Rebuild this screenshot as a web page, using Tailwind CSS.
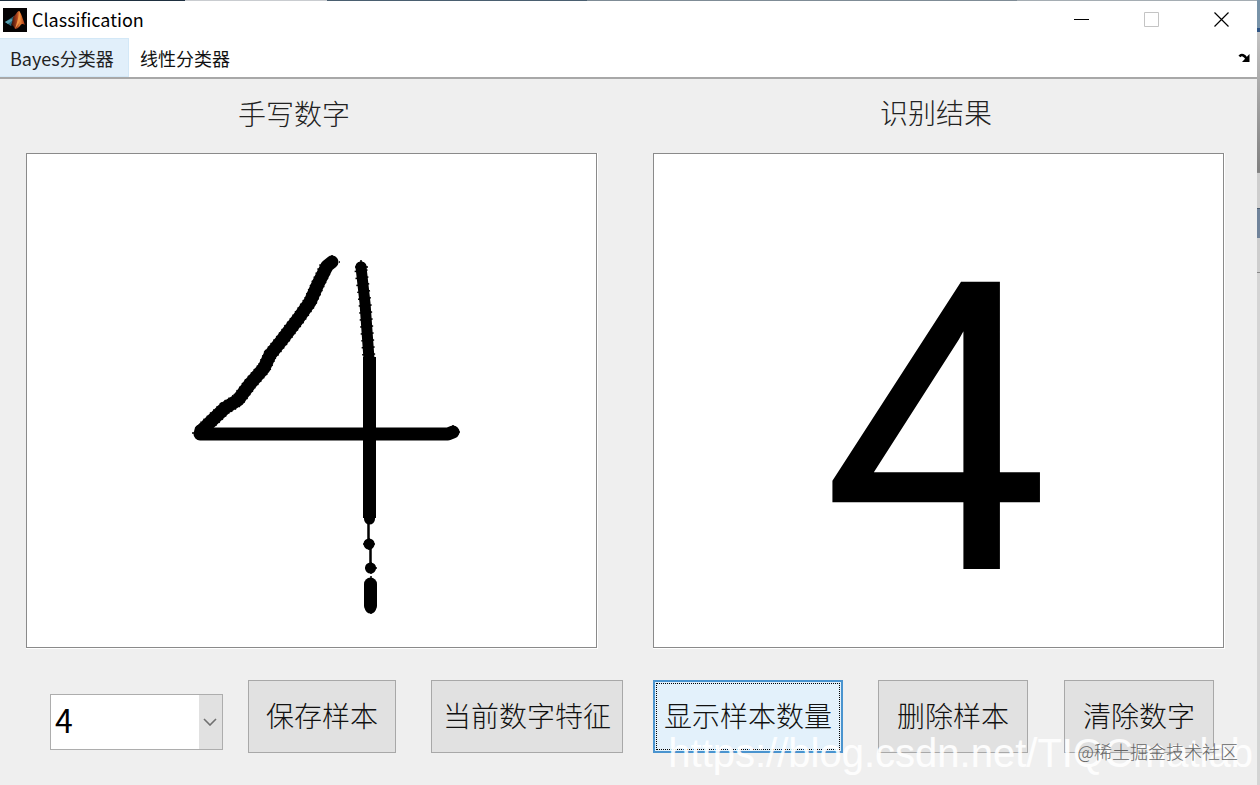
<!DOCTYPE html>
<html lang="zh-CN">
<head>
<meta charset="utf-8">
<meta name="viewport" content="width=device-width, initial-scale=1">
<title>Classification</title>
<script src="https://cdn.jsdelivr.net/npm/@tailwindcss/browser@4"></script>
</head>
<body class="relative flex min-h-screen overflow-x-hidden bg-[#efefef] font-['Noto_Sans_CJK_SC',sans-serif] text-black">
  <div class="flex min-w-0 flex-1 flex-col">
    <div class="flex h-px shrink-0" aria-hidden="true">
      <div class="w-[185px] bg-[#1e2f3f]"></div>
      <div class="w-[142px] bg-[#c9ccd0]"></div>
      <div class="w-[260px] bg-[#4a5f70]"></div>
      <div class="flex-1 bg-[#7f8c96]"></div>
      <div class="w-[240px] bg-[#a5adb3]"></div>
    </div>

    <header class="flex h-[37px] shrink-0 items-center bg-white pl-[3px]">
      <svg class="size-6" viewBox="0 0 24 24" aria-hidden="true">
        <defs>
          <linearGradient id="peak" x1="0" y1="0" x2="1" y2="0">
            <stop offset="0" stop-color="#2a0c06"/><stop offset=".4" stop-color="#a23c1c"/><stop offset=".65" stop-color="#e98338"/><stop offset="1" stop-color="#9c2c10"/>
          </linearGradient>
        </defs>
        <rect width="24" height="24" fill="#050304"/>
        <path d="M2 14 8 10l3-2 2 3-5 7-3-2z" fill="#2a6a80"/>
        <path d="M2 14 8 11l2 1-5 4z" fill="#5aa0b0"/>
        <path d="M11 8c2-1 3-5 5-5 2 1 4 9 6 14-3-2-4-1-5 1-2 2-3 3-5 3-1-2-2-4-4-4 2-3 1-7 3-9z" fill="url(#peak)"/>
        <path d="M16 3c1 1 2 7 1 10-1 2-3 5-5 8 2-7 4-12 4-18z" fill="#ee9444"/>
      </svg>
      <h1 class="ml-[5px] flex-1 pb-0.5 text-lg leading-6">Classification</h1>
      <div class="flex h-full items-center">
        <button type="button" aria-label="最小化" class="flex h-full w-[70px] items-center justify-center">
          <svg class="size-4" viewBox="0 0 16 16" fill="none" stroke="#000"><path d="M0 7.500h15"/></svg>
        </button>
        <button type="button" disabled aria-label="最大化" class="flex h-full w-[70px] items-center justify-center">
          <svg class="size-4" viewBox="0 0 16 16" fill="none" stroke="#c4c4c4"><path d="M.5.500h14v14H.5z"/></svg>
        </button>
        <button type="button" aria-label="关闭" class="flex h-full w-[70px] items-center justify-center">
          <svg class="size-4" viewBox="0 0 16 16" fill="none" stroke="#000" stroke-width="1.200"><path d="m.5.500 14 14m0-14-14 14"/></svg>
        </button>
      </div>
    </header>

    <nav class="flex h-[41px] shrink-0 items-stretch border-b-2 border-[#a8a8a8] bg-white text-lg leading-6">
      <button type="button" class="w-[129px] border border-l-0 border-[#d3e8f7] bg-[#e1effa] pl-[10px] text-left whitespace-nowrap text-[#222]">Bayes分类器</button>
      <button type="button" class="px-[11px] whitespace-nowrap text-[#111]">线性分类器</button>
      <button type="button" aria-label="停靠" class="mr-[7px] ml-auto flex items-center">
        <svg class="h-[10px] w-3" viewBox="0 0 12 10"><path d="M1.500 3.500c2-3 5-1 7 2" fill="none" stroke="#000" stroke-width="2.500"/><path d="M11.500 1v8H4z"/></svg>
      </button>
    </nav>

    <main class="flex flex-1 flex-col pt-3 pr-8 pl-[26px]">
      <div class="grid grid-cols-2 gap-x-[55px]">
        <section>
          <h2 class="h-[62px] pr-9 text-center text-[28px] leading-[44px] font-light text-[#222]">手写数字</h2>
          <div class="border-r border-b border-white">
            <div class="border border-[#8a8a8a] bg-white">
              <svg class="block h-[493px] w-full" viewBox="27 154 569 493" role="img" aria-label="手写数字 4" fill="none" stroke="#000" stroke-width="12" stroke-linecap="round" stroke-linejoin="round">
                <path d="m332 262-5 4-9 18-8 18-12 17-16 21-12 15-6 13-14 16-12 16-13 8-24 23" stroke-width="13"/>
                <path d="m326 267-8 17-8 18-12 17-16 21-12 15-6 13-14 16-12 16-13 8-20 19" stroke-width="14" stroke-linecap="butt" stroke-dasharray="1.500 3"/>
                <path d="M200 434h248l5-2" stroke-width="13"/>
                <path d="m361 267 4 36 4 56" stroke-width="11"/>
                <path d="m361 270 4 33 4 56" stroke-width="13" stroke-linecap="butt" stroke-dasharray="1.500 5.500"/>
                <path d="M369.500 357v161" stroke-width="13" stroke-linecap="butt"/>
                <path d="M369.500 516v3" stroke-width="11"/>
                <path d="M368.500 520v24M370.500 544v24" stroke-width="2.500"/>
                <path d="M370.500 584v22" stroke-width="13"/>
                <path d="M369 544h.1M370.500 568h.1M370.500 608h.1M361 267h.1M200 430h.1" stroke-width="11"/>
                <path d="M363 544h12M369 538v12M365 568h12M371 562v12M371 576v2M371 612v2M332 255v2M339 262h1M361 260v2M453 425v2M459 432h1M192 433h2M355 267h13" stroke-width="1.500" stroke-linecap="butt"/>
              </svg>
            </div>
          </div>
        </section>
        <section>
          <h2 class="h-[62px] pr-1.5 text-center text-[28px] leading-[42px] font-light text-[#222]">识别结果</h2>
          <div class="border-r border-b border-white">
            <div class="flex h-[495px] items-center justify-center border border-[#8a8a8a] bg-white">
              <output class="pt-[60px] pr-1.5 font-['Roboto','Liberation_Sans',sans-serif] text-[404px] leading-[480px]">4</output>
            </div>
          </div>
        </section>
      </div>

      <form class="mt-[31px] flex pr-[11px] pl-6 text-[28px] leading-8 font-light text-[#111]">
        <label for="digit" class="sr-only">数字</label>
        <div class="relative mt-[14px] h-14 w-[173px] shrink-0">
          <select id="digit" class="size-full appearance-none border border-[#adadad] bg-white pb-1.5 pl-1 text-[32px] leading-[48px] font-normal text-black">
            <option>0</option><option>1</option><option>2</option><option>3</option><option selected>4</option><option>5</option><option>6</option><option>7</option><option>8</option><option>9</option>
          </select>
          <span class="pointer-events-none absolute inset-y-px right-px flex w-[23px] items-center justify-center bg-[#e1e1e1] pr-0.5">
            <svg class="h-2 w-[14px]" viewBox="0 0 14 8" fill="none" stroke="#707070" stroke-width="1.600"><path d="m1 1 6 6 6-6"/></svg>
          </span>
        </div>
        <button type="button" class="ml-[25px] h-[73px] w-[148px] border border-[#a8a8a8] bg-[#e1e1e1] pb-1 whitespace-nowrap">保存样本</button>
        <button type="button" class="ml-[35px] h-[73px] w-[192px] border border-[#a8a8a8] bg-[#e1e1e1] pb-1 whitespace-nowrap">当前数字特征</button>
        <button type="button" class="ml-[30px] h-[73px] w-[190px] border-2 border-[#4a94cf] bg-[#e3f1fb] p-px whitespace-nowrap"><span class="flex size-full items-center justify-center border border-dotted border-black pb-1">显示样本数量</span></button>
        <button type="button" class="ml-[35px] h-[73px] w-[150px] border border-[#a8a8a8] bg-[#e1e1e1] pb-1 whitespace-nowrap">删除样本</button>
        <button type="button" class="ml-auto h-[73px] w-[150px] border border-[#a8a8a8] bg-[#e1e1e1] pb-1 whitespace-nowrap">清除数字</button>
      </form>
    </main>
  </div>

  <div class="flex w-[3px] shrink-0 flex-col" aria-hidden="true">
    <div class="h-7 bg-[#7893a8]"></div>
    <div class="h-1 bg-[#2e5484]"></div>
    <div class="h-[140px] bg-linear-to-b from-[#c4c4c4] to-[#808080]"></div>
    <div class="h-9 border-t border-[#888] bg-[#cdcdcd]"></div>
    <div class="h-[30px] border-t border-[#4c5c6e] bg-[#70839a]"></div>
    <div class="h-[34px] bg-[#cdcdcd]"></div>
    <div class="flex-1 border-t border-[#888] bg-[#d4d4d4]"></div>
  </div>

  <p class="pointer-events-none absolute right-[7px] bottom-2 font-['Liberation_Sans',Arial,sans-serif] text-[40px] leading-[48px] whitespace-nowrap text-white/90">https://blog.csdn.net/TIQCmatlab</p>
  <p class="pointer-events-none absolute right-[22px] bottom-[22px] text-lg leading-6 font-light whitespace-nowrap text-[#666]">@稀土掘金技术社区</p>
</body>
</html>
